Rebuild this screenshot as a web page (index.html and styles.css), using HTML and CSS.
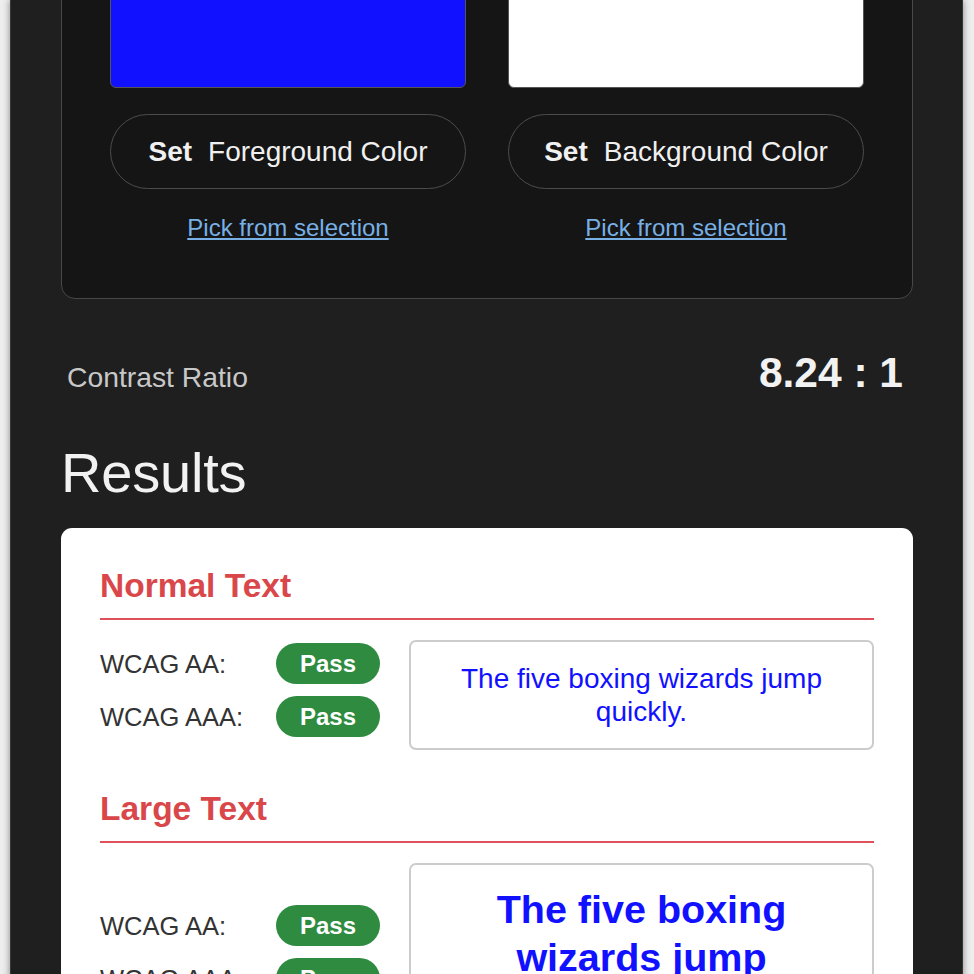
FILE: index.html
```html
<!DOCTYPE html>
<html lang="en">
<head>
<meta charset="utf-8">
<title>Contrast Checker</title>
<link rel="stylesheet" href="styles.css">
</head>
<body>
<div class="frame">
  <section class="picker">
    <div class="picker-col">
      <div class="swatch swatch-fg"></div>
      <button class="set-btn" type="button"><b class="set-word">Set</b>Foreground Color</button>
      <a class="pick-link" href="#">Pick from selection</a>
    </div>
    <div class="picker-col">
      <div class="swatch swatch-bg"></div>
      <button class="set-btn" type="button"><b class="set-word">Set</b>Background Color</button>
      <a class="pick-link" href="#">Pick from selection</a>
    </div>
  </section>

  <div class="ratio-row">
    <span class="ratio-label">Contrast Ratio</span>
    <span class="ratio-value">8.24 : 1</span>
  </div>

  <h2 class="results-title">Results</h2>

  <section class="results-card">
    <div class="result-section">
      <h3 class="result-heading">Normal Text</h3>
      <div class="result-row">
        <div class="checks">
          <span class="check-label">WCAG AA:</span><span class="badge">Pass</span>
          <span class="check-label">WCAG AAA:</span><span class="badge">Pass</span>
        </div>
        <div class="sample sample-normal">The five boxing wizards jump quickly.</div>
      </div>
    </div>
    <div class="result-section result-section-next">
      <h3 class="result-heading">Large Text</h3>
      <div class="result-row">
        <div class="checks">
          <span class="check-label">WCAG AA:</span><span class="badge">Pass</span>
          <span class="check-label">WCAG AAA:</span><span class="badge">Pass</span>
        </div>
        <div class="sample sample-large">The five boxing wizards jump quickly.</div>
      </div>
    </div>
  </section>
</div>
</body>
</html>
```
FILE: styles.css
```css
html, body {
  margin: 0;
  padding: 0;
  height: 100%;
  overflow: hidden;
}

body {
  background: #eeeeee;
  font-family: "Liberation Sans", Arial, Helvetica, sans-serif;
  padding-left: 10px;
}

.frame {
  box-sizing: border-box;
  width: 953px;
  min-height: 100%;
  background: #1f1f1f;
  border-left: 1px solid #383838;
  border-right: 1px solid #383838;
  box-shadow: 0 0 7px rgba(0, 0, 0, 0.45);
  padding: 0 49px 0 50px;
  overflow: hidden;
}

/* ---------- colour picker card ---------- */
.picker {
  margin-top: -131px;
  background: #151515;
  border: 1px solid #484848;
  border-radius: 14px;
  padding: 48px 48px 56px;
  display: grid;
  grid-template-columns: 1fr 1fr;
  column-gap: 42px;
}

.picker-col {
  display: flex;
  flex-direction: column;
  align-items: stretch;
}

.swatch {
  height: 170px;
  border: 1px solid #555555;
  border-radius: 6px;
  box-sizing: border-box;
}

.swatch-fg { background: #1111ff; }
.swatch-bg { background: #ffffff; }

.set-btn {
  margin-top: 26px;
  height: 75px;
  box-sizing: border-box;
  border: 1px solid #4c4c4c;
  border-radius: 38px;
  background: transparent;
  color: #f0f0f0;
  font-family: inherit;
  font-size: 28px;
  line-height: 32px;
  display: flex;
  align-items: center;
  justify-content: center;
  padding: 0;
}

.set-word {
  font-weight: 700;
  margin-right: 16px;
}

.pick-link {
  margin-top: 25px;
  align-self: center;
  font-size: 24px;
  line-height: 28px;
  color: #78b0e6;
  text-decoration: underline;
  text-underline-offset: 2px;
}

/* ---------- ratio ---------- */
.ratio-row {
  margin-top: 50px;
  padding: 0 10px 0 6px;
  display: flex;
  justify-content: space-between;
  align-items: baseline;
}

.ratio-label {
  font-size: 28.3px;
  line-height: 32px;
  color: #c8c8c8;
}

.ratio-value {
  font-size: 42.5px;
  line-height: 48px;
  font-weight: 700;
  color: #f2f2f2;
}

.results-title {
  margin: 44px 0 0;
  font-size: 56px;
  line-height: 64px;
  font-weight: 400;
  color: #f2f2f2;
  letter-spacing: -0.2px;
}

/* ---------- results card ---------- */
.results-card {
  margin-top: 23px;
  background: #ffffff;
  border-radius: 11px;
  padding: 39px 39px 40px;
}

.result-section-next {
  margin-top: 40px;
}

.result-heading {
  margin: 0;
  font-size: 33.5px;
  line-height: 38px;
  font-weight: 700;
  color: #d9474a;
  padding-bottom: 13px;
  border-bottom: 2px solid #e0505a;
}

.result-row {
  margin-top: 20px;
  display: flex;
  align-items: center;
}

.checks {
  display: grid;
  grid-template-columns: 176px 104px;
  row-gap: 12px;
  align-items: center;
  padding-bottom: 10px;
  flex: none;
}

.check-label {
  font-size: 25.5px;
  line-height: 30px;
  color: #333333;
}

.badge {
  height: 41px;
  border-radius: 21px;
  background: #2e8b40;
  color: #ffffff;
  font-size: 24px;
  font-weight: 700;
  display: flex;
  align-items: center;
  justify-content: center;
}

.sample {
  margin-left: 29px;
  flex: 1;
  border: 2px solid #cccccc;
  border-radius: 7px;
  padding: 20px 40px;
  text-align: center;
  color: #1111ff;
}

.sample-normal {
  font-size: 28px;
  line-height: 33px;
}

.sample-large {
  font-size: 39.5px;
  line-height: 48px;
  font-weight: 700;
}
```
